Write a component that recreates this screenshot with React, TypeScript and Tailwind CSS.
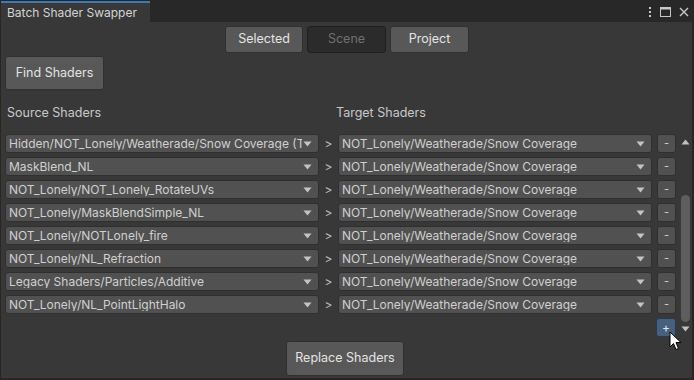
import React from "react";

const sources = [
  "Hidden/NOT_Lonely/Weatherade/Snow Coverage (Texture)",
  "MaskBlend_NL",
  "NOT_Lonely/NOT_Lonely_RotateUVs",
  "NOT_Lonely/MaskBlendSimple_NL",
  "NOT_Lonely/NOTLonely_fire",
  "NOT_Lonely/NL_Refraction",
  "Legacy Shaders/Particles/Additive",
  "NOT_Lonely/NL_PointLightHalo",
];

function Caret() {
  return (
    <svg width="9" height="6" viewBox="0 0 9 6" className="shrink-0">
      <path d="M0.5 0.5 L8.5 0.5 L4.5 5.5 Z" fill="#c4c4c4" />
    </svg>
  );
}

function Dropdown({ text, w }: { text: string; w: string }) {
  return (
    <div
      className={`${w} h-[19px] flex items-center bg-[#515151] rounded-[3px] border border-[#2f2f2f] pl-[3px] pr-[6px] gap-[1px]`}
    >
      <span className="flex-1 overflow-hidden whitespace-nowrap text-[12px] text-[#d0d0d0] leading-none">
        {text}
      </span>
      <Caret />
    </div>
  );
}

export default function App() {
  return (
    <div
      className="w-[694px] h-[380px] bg-[#2a2622] pl-[1px] pr-[2px] pt-[1px] pb-[2px] overflow-hidden"
      style={{ fontFamily: "Inter, 'Noto Sans', sans-serif" }}
    >
      <div className="w-full h-full flex flex-col bg-[#383838] relative">
        {/* tab bar */}
        <div className="h-[21px] bg-[#282828] flex items-stretch shrink-0">
          <div className="w-[149px] bg-[#383838] border-t-2 border-[#3a7ab8] flex items-center pl-[6px] text-[12px] text-[#d4d4d4]">
            Batch Shader Swapper
          </div>
          <div className="flex-1" />
          <div className="flex items-center gap-[8px] pr-[3px] text-[#c8c8c8]">
            <svg width="4" height="12" viewBox="0 0 4 12">
              <rect x="1" y="1" width="2" height="2" fill="#c8c8c8" />
              <rect x="1" y="5" width="2" height="2" fill="#c8c8c8" />
              <rect x="1" y="9" width="2" height="2" fill="#c8c8c8" />
            </svg>
            <svg width="11" height="10" viewBox="0 0 11 10">
              <rect x="0.5" y="0.5" width="10" height="9" fill="none" stroke="#c8c8c8" />
              <rect x="0.5" y="0.5" width="10" height="2" fill="#c8c8c8" />
            </svg>
            <svg width="10" height="10" viewBox="0 0 10 10">
              <path d="M1 1 L9 9 M9 1 L1 9" stroke="#c8c8c8" strokeWidth="1.4" />
            </svg>
          </div>
        </div>

        {/* toolbar */}
        <div className="flex justify-center gap-[4px] pt-[4px] pl-[1px] shrink-0">
          <div className="w-[78px] h-[27px] bg-[#585858] rounded-[3px] border border-[#303030] flex items-center justify-center text-[12.5px] text-[#e4e4e4]">
            Selected
          </div>
          <div className="w-[79px] h-[27px] bg-[#2b2b2b] rounded-[3px] border border-[#1f1f1f] flex items-center justify-center text-[12.5px] text-[#707070]">
            Scene
          </div>
          <div className="w-[79px] h-[27px] bg-[#585858] rounded-[3px] border border-[#303030] flex items-center justify-center text-[12.5px] text-[#e4e4e4]">
            Project
          </div>
        </div>

        <div className="pl-[4px] pt-[3px] shrink-0">
          <div className="w-[99px] h-[34px] bg-[#585858] rounded-[3px] border border-[#303030] flex items-center justify-center text-[12.5px] text-[#e4e4e4]">
            Find Shaders
          </div>
        </div>

        <div className="flex pt-[14px] h-[44px] shrink-0 text-[12.5px] text-[#c8c8c8]">
          <div className="w-[335px] pl-[6px]">Source Shaders</div>
          <div>Target Shaders</div>
        </div>

        <div className="flex flex-1 min-h-0">
          <div className="flex-1 flex flex-col">
            <div className="flex flex-col gap-[4px]">
              {sources.map((s) => (
                <div key={s} className="flex items-center h-[19px] pl-[4px]">
                  <Dropdown text={s} w="w-[314px]" />
                  <span className="w-[19px] text-center text-[12px] text-[#bdbdbd]">&gt;</span>
                  <Dropdown text="NOT_Lonely/Weatherade/Snow Coverage" w="w-[314px]" />
                  <div className="ml-[5px] w-[19px] h-[19px] bg-[#515151] rounded-[3px] border border-[#2f2f2f] flex items-center justify-center text-[11px] text-[#d0d0d0] leading-none">
                    -
                  </div>
                </div>
              ))}
            </div>
            <div className="flex justify-end pr-[3px] pt-[4px]">
              <div className="w-[20px] h-[19px] bg-[#46607f] rounded-[3px] border border-[#2a3a4e] flex items-center justify-center text-[12px] text-[#e8e8e8] leading-none">
                +
              </div>
            </div>
            <div className="flex justify-center pt-[4px] pl-[10px]">
              <div className="w-[118px] h-[35px] bg-[#585858] rounded-[3px] border border-[#303030] flex items-center justify-center text-[12.5px] text-[#e4e4e4]">
                Replace Shaders
              </div>
            </div>
          </div>
          {/* scrollbar */}
          <div className="w-[13px] flex flex-col items-center h-[200px]">
            <svg width="9" height="6" viewBox="0 0 9 6" className="mt-[5px]">
              <path d="M4.5 0.5 L8.5 5.5 L0.5 5.5 Z" fill="#c0c0c0" />
            </svg>
            <div className="mt-[50px] w-[9px] h-[127px] bg-[#5e5e5e] rounded-[5px]" />
            <svg width="9" height="6" viewBox="0 0 9 6" className="mt-[4px]">
              <path d="M0.5 0.5 L8.5 0.5 L4.5 5.5 Z" fill="#c0c0c0" />
            </svg>
          </div>
        </div>

        {/* cursor */}
        <svg
          width="14"
          height="21"
          viewBox="0 0 14 21"
          className="absolute left-[668px] top-[330px]"
        >
          <path
            d="M1 1 L1 16 L4.5 12.5 L7 18.5 L9.5 17.5 L7 11.5 L12 11.5 Z"
            fill="#ffffff"
            stroke="#000000"
            strokeWidth="1"
            strokeLinejoin="miter"
          />
        </svg>
      </div>
    </div>
  );
}
